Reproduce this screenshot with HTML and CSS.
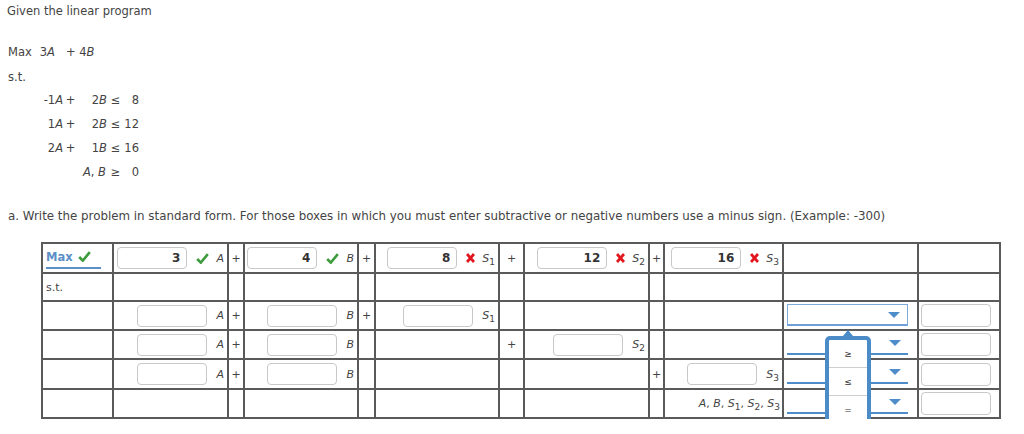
FILE: index.html
```html
<!DOCTYPE html>
<html lang="en">
<head>
<meta charset="utf-8">
<title>Linear program</title>
<link rel="stylesheet" href="styles.css">
</head>
<body>
<p class="intro">Given the linear program</p>
<div class="objective"><span>Max</span><span class="t1">3<i>A</i></span><span class="t2">+ 4<i>B</i></span></div>
<div class="st">s.t.</div>
<div class="cons">
  <span class="c1">-1<i>A</i></span><span class="op">+</span><span class="c2">2<i>B</i></span><span class="rel">≤</span><span class="rhs">8</span>
  <span class="c1">1<i>A</i></span><span class="op">+</span><span class="c2">2<i>B</i></span><span class="rel">≤</span><span class="rhs">12</span>
  <span class="c1">2<i>A</i></span><span class="op">+</span><span class="c2">1<i>B</i></span><span class="rel">≤</span><span class="rhs">16</span>
  <span class="nonneg"><i>A</i>, <i>B</i></span><span class="rel">≥</span><span class="rhs">0</span>
</div>
<p class="task">a. Write the problem in standard form. For those boxes in which you must enter subtractive or negative numbers use a minus sign. (Example: -300)</p>

<div class="wrap">
<table class="lp">
  <colgroup>
    <col class="w71"><col class="w115"><col class="w16"><col class="w114"><col class="w17"><col class="w124"><col class="w25"><col class="w125"><col class="w15"><col class="w119"><col class="w135"><col class="w82">
  </colgroup>
  <tr class="h30">
    <td><div class="maxsel"><span>Max</span><svg class="ok" viewBox="0 0 13 11"><path d="M1.2 6 L4.8 9.6 L11.8 1.2"/></svg></div></td>
    <td><div class="cell"><input class="box val" value="3"><svg class="ok mk" viewBox="0 0 13 11"><path d="M1.2 6 L4.8 9.6 L11.8 1.2"/></svg><i class="lbl">A</i></div></td>
    <td class="c">+</td>
    <td><div class="cell"><input class="box val" value="4"><svg class="ok mk" viewBox="0 0 13 11"><path d="M1.2 6 L4.8 9.6 L11.8 1.2"/></svg><i class="lbl">B</i></div></td>
    <td class="c">+</td>
    <td><div class="cell"><input class="box val" value="8"><svg class="bad mk" viewBox="0 0 9 10"><path d="M1 1 L8 9 M8 1 L1 9"/></svg><span class="lbl"><i>S</i><sub>1</sub></span></div></td>
    <td class="c">+</td>
    <td><div class="cell"><input class="box val" value="12"><svg class="bad mk" viewBox="0 0 9 10"><path d="M1 1 L8 9 M8 1 L1 9"/></svg><span class="lbl"><i>S</i><sub>2</sub></span></div></td>
    <td class="c">+</td>
    <td><div class="cell"><input class="box val" value="16"><svg class="bad mk" viewBox="0 0 9 10"><path d="M1 1 L8 9 M8 1 L1 9"/></svg><span class="lbl"><i>S</i><sub>3</sub></span></div></td>
    <td></td>
    <td></td>
  </tr>
  <tr class="h28">
    <td class="stc">s.t.</td>
    <td></td><td></td><td></td><td></td><td></td><td></td><td></td><td></td><td></td><td></td><td></td>
  </tr>
  <tr class="h29">
    <td></td>
    <td><div class="cell"><input class="box"><i class="lbl gap">A</i></div></td>
    <td class="c">+</td>
    <td><div class="cell"><input class="box"><i class="lbl gap">B</i></div></td>
    <td class="c">+</td>
    <td><div class="cell"><input class="box"><span class="lbl gap"><i>S</i><sub>1</sub></span></div></td>
    <td></td>
    <td></td>
    <td></td>
    <td></td>
    <td><div class="sel focus"><span class="arrow"></span></div></td>
    <td><input class="box rbox"></td>
  </tr>
  <tr class="h29">
    <td></td>
    <td><div class="cell"><input class="box"><i class="lbl gap">A</i></div></td>
    <td class="c">+</td>
    <td><div class="cell"><input class="box"><i class="lbl gap">B</i></div></td>
    <td></td>
    <td></td>
    <td class="c">+</td>
    <td><div class="cell"><input class="box"><span class="lbl gap"><i>S</i><sub>2</sub></span></div></td>
    <td></td>
    <td></td>
    <td><div class="sel"><span class="arrow"></span></div></td>
    <td><input class="box rbox"></td>
  </tr>
  <tr class="h30">
    <td></td>
    <td><div class="cell"><input class="box"><i class="lbl gap">A</i></div></td>
    <td class="c">+</td>
    <td><div class="cell"><input class="box"><i class="lbl gap">B</i></div></td>
    <td></td>
    <td></td>
    <td></td>
    <td></td>
    <td class="c">+</td>
    <td><div class="cell"><input class="box"><span class="lbl gap"><i>S</i><sub>3</sub></span></div></td>
    <td><div class="sel"><span class="arrow"></span></div></td>
    <td><input class="box rbox"></td>
  </tr>
  <tr class="h29">
    <td></td><td></td><td></td><td></td><td></td><td></td><td></td><td></td><td></td>
    <td><div class="cell vars"><span><i>A</i>, <i>B</i>, <i>S</i><sub>1</sub>, <i>S</i><sub>2</sub>, <i>S</i><sub>3</sub></span></div></td>
    <td><div class="sel"><span class="arrow"></span></div></td>
    <td><input class="box rbox"></td>
  </tr>
</table>
<div class="popup">
  <span class="pointer"></span>
  <div class="opt">≥</div>
  <div class="opt">≤</div>
  <div class="opt">=</div>
</div>
</div>
</body>
</html>
```

FILE: styles.css
```css
html, body {
  margin: 0;
  background: #fff;
}
body {
  padding: 3px 8px 0 8px;
  font-family: "DejaVu Sans", Verdana, sans-serif;
  font-size: 11.5px;
  color: #444;
}
p { margin: 0; }
.intro {
  line-height: 16px;
  margin-left: -1px;
}
.objective {
  margin-top: 25px;
  line-height: 16px;
  display: flex;
}
.objective .t1 { margin-left: 8px; }
.objective .t2 { margin-left: 11px; }
.st {
  margin-top: 9px;
  line-height: 16px;
}
.cons {
  margin-top: 3px;
  display: grid;
  grid-template-columns: 55px 15px 29px 17px 15px;
  grid-auto-rows: 24px;
  align-items: center;
}
.cons .c1, .cons .c2, .cons .rhs { text-align: right; }
.cons .op, .cons .rel { text-align: center; }
.cons .nonneg { grid-column: 1 / 4; text-align: right; padding-right: 1px; }
.task {
  margin-top: 24px;
  line-height: 16px;
  font-size: 11.85px;
}
.wrap {
  position: relative;
  margin-top: 18px;
  margin-left: 33px;
  width: 960px;
}
.lp {
  border-collapse: collapse;
  table-layout: fixed;
  width: 960px;
  font-size: 11px;
  color: #444;
}
.lp td {
  border: 2px solid #5a5a5a;
  padding: 0;
  vertical-align: middle;
}
.w71 { width: 71px; } .w115 { width: 115px; } .w16 { width: 16px; } .w114 { width: 114px; }
.w17 { width: 17px; } .w124 { width: 124px; } .w25 { width: 25px; } .w125 { width: 125px; }
.w15 { width: 15px; } .w119 { width: 119px; } .w135 { width: 135px; } .w82 { width: 82px; }
.h30 td { height: 28px; }
.h28 td { height: 26px; }
.h29 td { height: 27px; }
.lp td.c { text-align: center; }
.lp td.stc { padding-left: 3px; }
.cell {
  display: flex;
  align-items: center;
  justify-content: flex-end;
  padding-right: 3px;
}
.box {
  box-sizing: border-box;
  width: 70px;
  height: 22px;
  border: 1px solid #c8c8c8;
  border-radius: 4px;
  background: #fff;
  padding: 0 6px;
  margin: 0;
  font-family: "DejaVu Sans", Verdana, sans-serif;
  font-size: 12px;
  font-weight: bold;
  color: #333;
  text-align: right;
  outline: none;
  display: block;
}
.rbox {
  margin-left: 2px;
  height: 23px;
}
.mk { margin-left: 9px; flex: none; }
.ok {
  width: 13px;
  height: 11px;
  fill: none;
  stroke: #3d9a3d;
  stroke-width: 2.6;
}
.bad {
  width: 9px;
  height: 10px;
  fill: none;
  stroke: #e2161e;
  stroke-width: 2.8;
}
.lbl { margin-left: 7px; white-space: nowrap; }
.lbl.gap { margin-left: 9px; }
sub {
  font-size: 9px;
  font-style: normal;
  vertical-align: -3px;
  line-height: 0;
}
.vars { padding-right: 2px; white-space: nowrap; }
.maxsel {
  display: flex;
  align-items: center;
  width: 55px;
  margin-left: 3px;
  margin-top: 2px;
  padding-bottom: 3px;
  border-bottom: 2px solid #5c8fc6;
  color: #5c8fc6;
  font-weight: bold;
  font-size: 11.5px;
}
.maxsel .ok { margin-left: 5px; }
.sel {
  position: relative;
  box-sizing: border-box;
  width: 121px;
  height: 22px;
  margin: -2px 0 0 3px;
  border-bottom: 2px solid #4f8dca;
}
.sel.focus {
  border: 1px solid #7eaadb;
  border-bottom: 2px solid #6f9fd6;
}
.arrow {
  position: absolute;
  right: 7px;
  top: 7px;
  width: 0;
  height: 0;
  border-left: 6px solid transparent;
  border-right: 6px solid transparent;
  border-top: 6px solid #4f8dca;
}
.popup {
  position: absolute;
  left: 784px;
  top: 94px;
  box-sizing: border-box;
  width: 46px;
  height: 91px;
  border: 4px solid #4b8bc8;
  border-radius: 5px;
  background: #fff;
  display: flex;
  flex-direction: column;
}
.pointer {
  position: absolute;
  left: 14px;
  top: -10px;
  width: 0;
  height: 0;
  border-left: 5px solid transparent;
  border-right: 5px solid transparent;
  border-bottom: 6px solid #4b8bc8;
}
.opt {
  flex: 1;
  display: flex;
  align-items: center;
  justify-content: center;
  font-size: 9px;
  color: #333;
  border-top: 1px solid #cfcfcf;
}
.opt:first-of-type { border-top: none; }
```
